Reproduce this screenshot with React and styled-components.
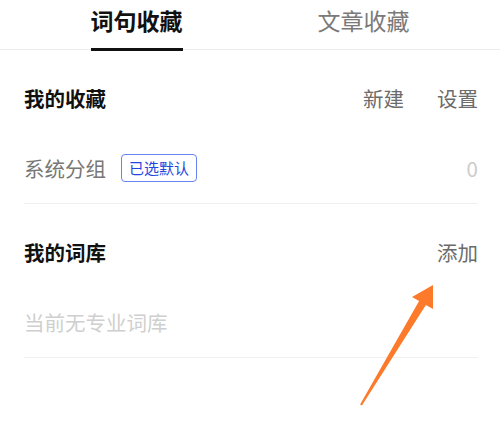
import * as React from "react";
import styled, { createGlobalStyle } from "styled-components";

const EstiloGlobal = createGlobalStyle`
    html, body {
        margin: 0;
        padding: 0;
        background: #ffffff;
    }

    body {
        font-family: "Noto Sans CJK SC", "Noto Sans", sans-serif;
    }
`;

const Pagina = styled.div`
    position: relative;
    width: 500px;
    height: 440px;
    overflow: hidden;
    background: #ffffff;
`;

const BarraPestanas = styled.div`
    display: flex;
    justify-content: center;
    align-items: flex-end;
    gap: 135px;
    height: 49px;
    border-bottom: 1px solid #ededed;
`;

const Pestana = styled.div`
    padding: 4px 0 12px;
    margin-bottom: -2px;
    font-size: 23px;
    line-height: 32px;
    font-weight: ${(props) => (props.$activa ? 700 : 400)};
    color: ${(props) => (props.$activa ? "#111111" : "#7a7a7a")};
    border-bottom: 3px solid
        ${(props) => (props.$activa ? "#111111" : "transparent")};
`;

const Seccion = styled.section`
    padding: 14px 22px 0 24px;
`;

const FilaCabecera = styled.div`
    display: flex;
    align-items: center;
    justify-content: space-between;
    height: 68px;
`;

const Titulo = styled.h2`
    margin: 0;
    font-size: 20.5px;
    font-weight: 700;
    color: #111111;
`;

const Acciones = styled.div`
    display: flex;
    gap: 33px;
`;

const Accion = styled.span`
    font-size: 20.5px;
    color: #6b6b6b;
`;

const FilaElemento = styled.div`
    display: flex;
    align-items: center;
    height: 71px;
    border-bottom: 1px solid #f0f0f0;
`;

const Etiqueta = styled.span`
    font-size: 20.5px;
    color: ${(props) => (props.$vacia ? "#cfcfcf" : "#777777")};
`;

const Insignia = styled.span`
    display: inline-flex;
    align-items: center;
    box-sizing: border-box;
    height: 28px;
    margin-left: 15px;
    padding: 0 7px;
    font-size: 15px;
    color: #2446e0;
    border: 1px solid #6585f2;
    border-radius: 4px;
`;

const Contador = styled.span`
    margin-left: auto;
    font-size: 20.5px;
    color: #cccccc;
`;

const Flecha = styled.svg`
    position: absolute;
    top: 0;
    left: 0;
    pointer-events: none;
`;

const App = () => {
    return (
        <Pagina>
            <EstiloGlobal />
            <BarraPestanas>
                <Pestana $activa>词句收藏</Pestana>
                <Pestana>文章收藏</Pestana>
            </BarraPestanas>

            <Seccion>
                <FilaCabecera>
                    <Titulo>我的收藏</Titulo>
                    <Acciones>
                        <Accion>新建</Accion>
                        <Accion>设置</Accion>
                    </Acciones>
                </FilaCabecera>
                <FilaElemento>
                    <Etiqueta>系统分组</Etiqueta>
                    <Insignia>已选默认</Insignia>
                    <Contador>0</Contador>
                </FilaElemento>
            </Seccion>

            <Seccion>
                <FilaCabecera>
                    <Titulo>我的词库</Titulo>
                    <Accion>添加</Accion>
                </FilaCabecera>
                <FilaElemento>
                    <Etiqueta $vacia>当前无专业词库</Etiqueta>
                </FilaElemento>
            </Seccion>

            {/* flecha naranja que señala "添加" */}
            <Flecha width="500" height="440" viewBox="0 0 500 440">
                <polygon
                    points="433,285 412,297 419.1,300.9 360.1,404.5 361.9,405.5 425.9,305.1 433,309"
                    fill="#fd7a2a"
                />
            </Flecha>
        </Pagina>
    );
};

export default App;
